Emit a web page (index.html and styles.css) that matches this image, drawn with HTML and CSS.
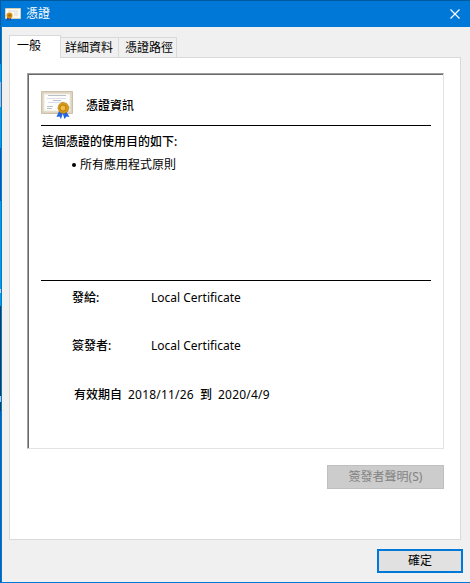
FILE: index.html
```html
<!DOCTYPE html>
<html lang="zh-Hant">
<head>
<meta charset="utf-8">
<title>憑證</title>
<link rel="stylesheet" href="styles.css">
</head>
<body>
<div class="desktop">
  <main class="dialog">
    <header class="titlebar">
      <svg class="cert-icon small" viewBox="0 0 16 13"><path d="M.5.5h15v10H.5z" fill="#fcf9ef" stroke="#d8ceb5"/><path d="M3 3h10M9 5h4M9 7h4" stroke="#d9dce0"/><path d="M2 9v4l2-1 2 1V9z" fill="#1e50a4"/><circle cx="4.5" cy="7.5" r="3" fill="#d79112"/><circle cx="4.5" cy="7.5" r="1.2" fill="#a86400"/></svg>
      <h1 class="title">憑證</h1>
      <svg class="close" viewBox="0 0 10 10"><path d="M.5.5l9 9M9.5.5l-9 9" stroke="#fff" stroke-width="1.2"/></svg>
    </header>
    <nav class="tabs">
      <span class="tab active">一般</span>
      <span class="tab">詳細資料</span>
      <span class="tab last">憑證路徑</span>
    </nav>
    <section class="panel">
      <div class="sheet">
        <div class="heading">
          <svg class="cert-icon large" viewBox="0 0 33 29">
            <path d="M.5 1.5h31v22H.5z" fill="#ddd3bf" stroke="#cbc0aa"/>
            <path d="M3 4h26v17H3z" fill="#fdfdfb" stroke="#eee9de"/>
            <path d="M7 5.500h18M12 10.500h8M6 16.500h6M6 18.500h5" stroke="#a9aebd" stroke-width=".8"/>
            <path d="M6 8.500h19M7 12.500h17" stroke="#cfd4e5" stroke-width=".8"/>
            <path d="M18 21l-2.500 6 3-.5 1.500 2.500L22 23zM25 21l3.500 6-3-.5-2 2.500-2-6z" fill="#2565df"/>
            <path d="M21.500 12.200l2.200.7 2.100.5 1 1.800 1.200 1.900-.4 2.100-.7 2.100-1.900 1-1.800 1.100-2.200-.4-2.100-.8-1-1.800-1-1.900.5-2.200.7-1.900 1.800-1.100z" fill="#d69a18" stroke="#b97908" stroke-width=".6"/>
            <circle cx="21.900" cy="18" r="3" fill="#edbd47" stroke="#ae7205" stroke-width=".8"/>
          </svg>
          <h2>憑證資訊</h2>
        </div>
        <div class="purposes">
          <p>這個憑證的使用目的如下:</p>
          <ul><li>所有應用程式原則</li></ul>
        </div>
        <dl class="details">
          <dt>發給:</dt><dd>Local Certificate</dd>
          <dt>簽發者:</dt><dd>Local Certificate</dd>
        </dl>
        <p class="validity"><b>有效期自</b><span class="from">2018/11/26</span><b>到</b><span class="to">2020/4/9</span></p>
      </div>
      <button class="statement" disabled>簽發者聲明(S)</button>
    </section>
    <footer class="footer"><button class="ok">確定</button></footer>
  </main>
</div>
</body>
</html>
```
FILE: styles.css
```css
* { box-sizing: border-box; }
body, h1, h2, p, ul, dl, dd { margin: 0; padding: 0; }
body {
  font: 12px/16px "Noto Sans", "Noto Sans CJK TC", sans-serif;
  color: #000;
  width: 470px;
  height: 583px;
  overflow: hidden;
}
.desktop {
  height: 583px;
  padding-left: 1px;
  background: linear-gradient(#005a9e 0 64px, #009fdb 64px 82px, #b9b9b9 82px 107px, #009fdb 107px 148px, #0058ae 148px 201px, #009fdb 201px 289px, #c4d3df 289px 293px, #009fdb 293px 306px, #063d4d 306px 396px, #b8c4cf 396px 402px, #063d4d 402px 411px, #0062b1 411px);
}
.dialog {
  display: flex;
  flex-direction: column;
  height: 583px;
  border-left: 1px solid #0078d7;
  border-top: 1px solid #005a9e;
  border-bottom: 1px solid #0078d7;
  background: #f0f0f0;
}
.titlebar {
  display: flex;
  align-items: center;
  height: 26px;
  margin-left: -1px;
  padding: 0 10px 0 4px;
  background: #0078d7;
  color: #fff;
}
.cert-icon { display: block; flex: none; }
.cert-icon.small { width: 16px; height: 13px; }
.title { margin-left: 5px; font-size: 12px; font-weight: 400; }
.close { width: 10px; height: 10px; margin-left: auto; }
.tabs { display: flex; align-items: flex-end; height: 30px; margin-left: 7px; }
.tab {
  width: 58px;
  height: 20px;
  padding-left: 4px;
  border: 1px solid #d9d9d9;
  border-width: 1px 1px 0 0;
  white-space: nowrap;
  line-height: 20px;
}
.tab.last { padding-left: 6px; }
.tab.active {
  position: relative;
  width: 52px;
  height: 23px;
  margin-bottom: -1px;
  padding-left: 7px;
  border-left-width: 1px;
  background: #fff;
  line-height: 20px;
}
.panel {
  width: 452px;
  height: 483px;
  margin-left: 7px;
  padding: 15px 16px 0 17px;
  border: 1px solid #d9d9d9;
  background: #fff;
}
.sheet {
  width: 417px;
  height: 376px;
  padding: 0 11px 0 12px;
  border: 1px solid #e3e3e3;
  border-top-color: #a0a0a0;
  border-left-color: #a0a0a0;
  box-shadow: inset 1px 1px #696969;
}
.heading {
  display: flex;
  height: 52px;
  margin-left: 1px;
  margin-right: 1px;
  padding-top: 16px;
  border-bottom: 1px solid #000;
}
.cert-icon.large { width: 33px; height: 29px; }
h2 { margin: 8px 0 0 12px; font-size: 12px; line-height: 16px; font-weight: 500; }
.purposes {
  height: 155px;
  margin: 0 1px;
  padding: 8px 0 0 1px;
  border-bottom: 1px solid #000;
  font-weight: 500;
}
ul { margin-top: 7px; padding-left: 30px; list-style: none; font-weight: 400; }
li { display: flex; align-items: center; }
li::before { content: ""; width: 4px; height: 4px; margin-right: 4px; border-radius: 50%; background: #000; }
.details {
  display: grid;
  grid-template-columns: 79px 1fr;
  grid-auto-rows: 16px;
  row-gap: 32px;
  margin: 9px 0 0 32px;
}
dt, .validity b { font-weight: 500; }
dd, .from, .to { font-family: "Noto Sans", sans-serif; }
.validity { display: flex; margin: 33px 0 0 34px; white-space: nowrap; }
.from { width: 72px; margin-left: 6px; letter-spacing: .2px; }
.to { margin-left: 6px; letter-spacing: .2px; }
button { display: block; margin-left: auto; padding: 0; font: inherit; }
.statement {
  width: 117px;
  height: 24px;
  margin-top: 16px;
  border: 1px solid #bfbfbf;
  background: #ccc;
  color: #838383;
}
.footer { padding: 9px 7px 0 0; }
.ok { width: 86px; height: 24px; border: 2px solid #0078d7; background: #e1e1e1; color: #000; }
```
